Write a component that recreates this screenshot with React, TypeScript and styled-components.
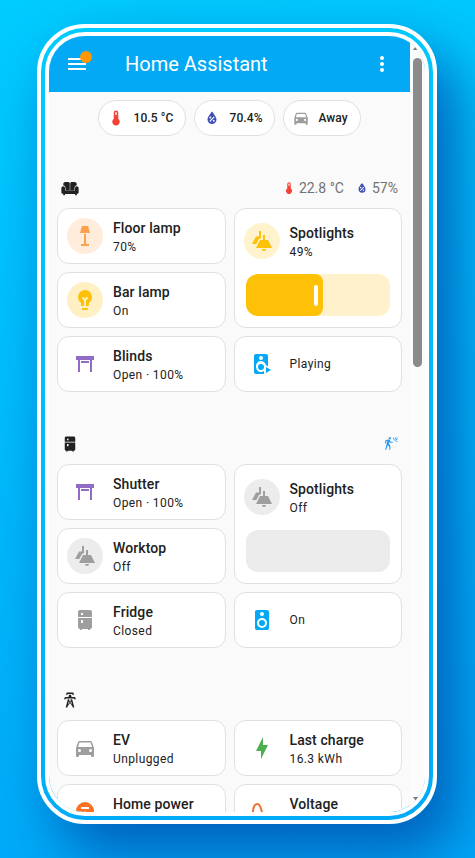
import React from "react";
import styled, { createGlobalStyle } from "styled-components";

const GlobalStyle = createGlobalStyle`
  * { box-sizing: border-box; }
  body {
    margin: 0;
    font-family: Roboto, "Noto Sans", sans-serif;
    color: #212121;
    overflow: hidden;
  }
`;

const paths = {
  menu: "M3,6H21V8H3V6M3,11H21V13H3V11M3,16H21V18H3V16Z",
  dots: "M12,16A2,2 0 0,1 14,18A2,2 0 0,1 12,20A2,2 0 0,1 10,18A2,2 0 0,1 12,16M12,10A2,2 0 0,1 14,12A2,2 0 0,1 12,14A2,2 0 0,1 10,12A2,2 0 0,1 12,10M12,4A2,2 0 0,1 14,6A2,2 0 0,1 12,8A2,2 0 0,1 10,6A2,2 0 0,1 12,4Z",
  thermometer: "M15 13V5A3 3 0 0 0 9 5V13A5 5 0 1 0 15 13M12 4A1 1 0 0 1 13 5V8H11V5A1 1 0 0 1 12 4Z",
  humidity:
    "M12,3.25C12,3.25 6,10 6,14C6,17.32 8.69,20 12,20A6,6 0 0,0 18,14C18,10 12,3.25 12,3.25M14.47,9.97L15.53,11.03L9.53,17.03L8.47,15.97M9.75,10A1.25,1.25 0 0,1 11,11.25A1.25,1.25 0 0,1 9.75,12.5A1.25,1.25 0 0,1 8.5,11.25A1.25,1.25 0 0,1 9.75,10M14.25,14.5A1.25,1.25 0 0,1 15.5,15.75A1.25,1.25 0 0,1 14.25,17A1.25,1.25 0 0,1 13,15.75A1.25,1.25 0 0,1 14.25,14.5Z",
  car: "M5,11L6.5,6.5H17.5L19,11M17.5,16A1.5,1.5 0 0,1 16,14.5A1.5,1.5 0 0,1 17.5,13A1.5,1.5 0 0,1 19,14.5A1.5,1.5 0 0,1 17.5,16M6.5,16A1.5,1.5 0 0,1 5,14.5A1.5,1.5 0 0,1 6.5,13A1.5,1.5 0 0,1 8,14.5A1.5,1.5 0 0,1 6.5,16M18.92,6C18.72,5.42 18.16,5 17.5,5H6.5C5.84,5 5.28,5.42 5.08,6L3,12V20A1,1 0 0,0 4,21H5A1,1 0 0,0 6,20V19H18V20A1,1 0 0,0 19,21H20A1,1 0 0,0 21,20V12L18.92,6Z",
  sofa: "M11.7 15H6V12.5C6 10 4.8 8.6 3 8.3V7C3 5 4.3 4 6 4H9.5C10.8 4 11.7 4.8 11.7 6V15ZM12.3 15H18V12.5C18 10 19.2 8.6 21 8.3V7C21 5 19.7 4 18 4H14.5C13.2 4 12.3 4.8 12.3 6V15ZM3 9.5C1.5 9.5 0.5 10.6 0.5 12V17.5C0.5 18.9 1.5 19.6 3 19.8V21.5H5.3V20H18.7V21.5H21V19.8C22.5 19.6 23.5 18.9 23.5 17.5V12C23.5 10.6 22.5 9.5 21 9.5S18.7 10.6 18.7 12V15.3H5.3V12C5.3 10.6 4.5 9.5 3 9.5Z",
  floorLamp: "M17,9H7L9,2H15M11,20V10H13V20H16V22H8V20H11Z",
  bulb: "M12,2A7,7 0 0,0 5,9C5,11.38 6.19,13.47 8,14.74V17A1,1 0 0,0 9,18H11V12.4L8.7,10.1L10.1,8.7L12,10.6L13.9,8.7L15.3,10.1L13,12.4V18H15A1,1 0 0,0 16,17V14.74C17.81,13.47 19,11.38 19,9A7,7 0 0,0 12,2M9,21A1,1 0 0,0 10,22H14A1,1 0 0,0 15,21V20H9V21Z",
  shutter: "M3 4H21V8H19V20H17V8H7V20H5V8H3V4M8 9H16V11H8V9Z",
  spots: "M12 20H16A2 2 0 0 1 12 20M13 6H15V11H18L22 19H6L10 11H13ZM9 2H11V9L9 10L6.3 15H2L6 7.5H9Z",
  fridge:
    "M19 4V9H10V5H8V9H5V4C5 2.9 5.9 2 7 2H17C18.11 2 19 2.9 19 4M5 19V10H19V19C19 20.11 18.11 21 17 21V22H15V21H9V22H7V21C5.9 21 5 20.11 5 19M8 12V15H10V12H8ZM8 7V9H10V7Z",
  speaker:
    "M12,12A3,3 0 0,0 9,15A3,3 0 0,0 12,18A3,3 0 0,0 15,15A3,3 0 0,0 12,12M12,20A5,5 0 0,1 7,15A5,5 0 0,1 12,10A5,5 0 0,1 17,15A5,5 0 0,1 12,20M12,4A2,2 0 0,1 14,6A2,2 0 0,1 12,8C10.89,8 10,7.1 10,6C10,4.89 10.89,4 12,4M17,2H7C5.89,2 5,2.89 5,4V20A2,2 0 0,0 7,22H17A2,2 0 0,0 19,20V4C19,2.89 18.1,2 17,2Z",
  speakerPlay:
    "M16 15V21L21 18L16 15M11 12A3 3 0 0 0 8 15A3 3 0 0 0 11 18A3 3 0 0 0 14 15A3 3 0 0 0 11 12M11 4A2 2 0 0 0 9 6A2 2 0 0 0 11 8A2 2 0 0 0 13 6A2 2 0 0 0 11 4M16 2H6C4.89 2 4 2.89 4 4V20A2 2 0 0 0 6 22H14V19A5 5 0 0 1 6 15A5 5 0 0 1 16 13.2L18 14.3V4C18 2.89 17.1 2 16 2Z",
  motion:
    "M10,0.2C9,0.2 8.2,1 8.2,2C8.2,3 9,3.8 10,3.8C11,3.8 11.8,3 11.8,2C11.8,1 11,0.2 10,0.2M15.67,1A7.33,7.33 0 0,0 23,8.33V7A6,6 0 0,1 17,1H15.67M18.33,1C18.33,3.58 20.42,5.67 23,5.67V4.33C21.16,4.33 19.67,2.84 19.67,1H18.33M21,1A2,2 0 0,0 23,3V1H21M7.92,4.03C7.75,4.03 7.58,4.06 7.42,4.11L2,5.8V11H3.8V7.33L5.91,6.67L2,22H3.8L6.67,13.89L9,17V22H10.8V15.59L8.31,11.05L9.04,8.18L10.12,10H15V8.2H11.38L9.38,4.87C9.08,4.37 8.54,4.03 7.92,4.03Z",
  tower:
    "M8.28,5.45L6.5,4.55L7.76,2H16.23L17.5,4.55L15.72,5.44L15,4H9L8.28,5.45M18.62,8H14.09L13.3,5H10.7L9.91,8H5.38L4.1,10.55L5.89,11.44L6.62,10H17.38L18.1,11.45L19.89,10.56L18.62,8M17.77,22H15.7L15.46,21.1L12,15.9L8.53,21.1L8.3,22H6.23L9.12,11H11.19L10.83,12.35L12,14.1L13.16,12.35L12.81,11H14.88L17.77,22M11.4,15L10.5,13.65L9.32,18.13L11.4,15M14.68,18.12L13.5,13.64L12.6,15L14.68,18.12Z",
  bolt: "M11 15H6L13 1V9H18L11 23V15Z",
  meter: "M12 2A9 9 0 0 0 3 11C3 14 4.4 16.6 6.7 18.3V22H17.3V18.3C19.6 16.6 21 14 21 11A9 9 0 0 0 12 2M8 7V9H16V7H8M12.5 10.5L9.5 14.5H11.5V18L14.5 14H12.5Z",
  sine: "M16.5,21C13.5,21 12.31,16.76 11.05,12.28C10.14,9.04 9,5 7.5,5C4.11,5 4,11.93 4,12H2C2,11.63 2.06,3 7.5,3C10.5,3 11.71,7.25 12.97,11.74C13.83,14.8 15,19 16.5,19C19.94,19 20.03,12.07 20.03,12H22.03C22.03,12.37 21.97,21 16.5,21Z",
};

type IconName = keyof typeof paths;

const Svg = styled.svg<{ $size: number; $color: string }>`
  display: block;
  flex: none;
  width: ${(p) => p.$size}px;
  height: ${(p) => p.$size}px;
  fill: ${(p) => p.$color};
`;

const Icon = ({ name, size = 24, color }: { name: IconName; size?: number; color: string }) => (
  <Svg viewBox="0 0 24 24" $size={size} $color={color} aria-hidden>
    <path fillRule="evenodd" d={paths[name]} />
  </Svg>
);

const Backdrop = styled.div`
  height: 858px;
  padding: 24px 38px 34px 37px;
  background: linear-gradient(170deg, #00ccff 0%, #00a8f8 100%);
`;

const Phone = styled.div`
  width: 400px;
  height: 800px;
  border: 12px double #fff;
  border-radius: 48px;
  box-shadow: 20px 30px 60px rgba(0, 90, 180, 0.95);
`;

const Screen = styled.div`
  display: flex;
  height: 776px;
  border-radius: 36px;
  background: #fafafa;
  overflow: hidden;
`;

const Main = styled.main`
  width: 361px;
`;

const Toolbar = styled.header`
  display: flex;
  align-items: center;
  height: 56px;
  padding: 0 16px;
  background: #03a9f4;
`;

const MenuButton = styled.div`
  position: relative;
  width: 24px;
`;

const Badge = styled.span`
  position: absolute;
  top: -1px;
  right: -3px;
  width: 12px;
  height: 12px;
  border-radius: 50%;
  background: #ff9800;
`;

const Title = styled.h1`
  flex: 1;
  margin: 0 0 0 36px;
  font-size: 20px;
  font-weight: 400;
  line-height: 24px;
  color: #fff;
`;

const Chips = styled.div`
  display: flex;
  justify-content: center;
  gap: 8px;
  margin-top: 8px;
`;

const Chip = styled.div<{ $width: number }>`
  display: flex;
  align-items: center;
  gap: 8.5px;
  width: ${(p) => p.$width}px;
  height: 36px;
  padding-left: 8px;
  border: 1px solid #e0e0e0;
  border-radius: 18px;
  background: #fff;
  font-size: 12px;
  font-weight: 500;
  letter-spacing: 0.1px;
  white-space: nowrap;
`;

const Section = styled.section`
  margin-top: 40px;
  padding: 0 8px;
`;

const SectionHead = styled.div`
  display: flex;
  align-items: center;
  justify-content: space-between;
  height: 32px;
  padding: 0 4px 8px;
  color: #727272;
  font-size: 14px;
`;

const Readings = styled.div`
  display: flex;
  align-items: center;
  gap: 11px;
  padding-bottom: 1px;
`;

const Reading = styled.span`
  display: flex;
  align-items: center;
  gap: 3px;
`;

const Grid = styled.div`
  display: grid;
  grid-template-columns: 1fr 1fr;
  grid-auto-rows: 56px;
  gap: 8px;
`;

const Card = styled.article<{ $tall?: boolean }>`
  grid-row: span ${(p) => (p.$tall ? 2 : 1)};
  border: 1px solid #e0e0e0;
  border-radius: 12px;
  background: #fff;
`;

const CardRow = styled.div<{ $tall?: boolean }>`
  display: flex;
  align-items: center;
  gap: 10px;
  height: ${(p) => (p.$tall ? 64 : 54)}px;
  padding-left: 9px;
`;

const IconDisc = styled.div<{ $fill?: string }>`
  display: grid;
  place-items: center;
  flex: none;
  width: 36px;
  height: 36px;
  border-radius: 50%;
  background: ${(p) => p.$fill ?? "transparent"};
`;

const Labels = styled.div<{ $named: boolean }>`
  min-height: ${(p) => (p.$named ? 38 : 0)}px;
  padding-top: ${(p) => (p.$named ? 1 : 0)}px;
`;

const Name = styled.div`
  margin-bottom: 1px;
  font-size: 14px;
  font-weight: 500;
  line-height: 20px;
  letter-spacing: 0.1px;
`;

const State = styled.div`
  font-size: 12px;
  line-height: 16px;
  letter-spacing: 0.4px;
`;

const Slider = styled.div<{ $track: string }>`
  width: 144px;
  height: 42px;
  margin: 1px 0 0 11px;
  border-radius: 12px;
  background: ${(p) => p.$track};
  overflow: hidden;
`;

const SliderFill = styled.div`
  display: flex;
  align-items: center;
  justify-content: flex-end;
  width: 77px;
  height: 100%;
  padding-right: 5px;
  border-radius: 0 8px 8px 0;
  background: #ffc107;
`;

const Handle = styled.span`
  width: 4px;
  height: 21px;
  border-radius: 2px;
  background: #fff;
`;

const Scrollbar = styled.div`
  display: flex;
  flex-direction: column;
  align-items: center;
  width: 15px;
  height: 100%;
  padding: 10px 0 11px;
  background: #fcfcfc;
`;

const Thumb = styled.div`
  width: 9px;
  height: 309px;
  margin: 8px 0 auto;
  border-radius: 5px;
  background: #8b8b8b;
`;

const Arrow = styled.span<{ $down?: boolean }>`
  width: 6px;
  height: 4px;
  margin-right: 3px;
  background: #777;
  clip-path: ${(p) => (p.$down ? "polygon(0 0, 100% 0, 50% 100%)" : "polygon(0 100%, 100% 100%, 50% 0)")};
`;

type TileProps = {
  icon: IconName;
  color: string;
  disc?: string;
  name?: string;
  state?: string;
  tall?: boolean;
  children?: React.ReactNode;
};

const Tile = ({ icon, color, disc, name, state, tall, children }: TileProps) => (
  <Card $tall={tall}>
    <CardRow $tall={tall}>
      <IconDisc $fill={disc}>
        <Icon name={icon} color={color} />
      </IconDisc>
      <Labels $named={Boolean(name)}>
        {name && <Name>{name}</Name>}
        {state && <State>{state}</State>}
      </Labels>
    </CardRow>
    {children}
  </Card>
);

const RED = "#f44336";
const INDIGO = "#3f51b5";
const GREY = "#9e9e9e";
const AMBER = "#ffc107";
const PURPLE = "#926bc7";
const BLUE = "#03a9f4";

export default function App() {
  return (
    <Backdrop>
      <GlobalStyle />
      <Phone>
        <Screen>
          <Main>
            <Toolbar>
              <MenuButton>
                <Icon name="menu" color="#fff" />
                <Badge />
              </MenuButton>
              <Title>Home Assistant</Title>
              <Icon name="dots" color="#fff" />
            </Toolbar>
            <Chips>
              <Chip $width={88}>
                <Icon name="thermometer" size={18} color={RED} />
                10.5 °C
              </Chip>
              <Chip $width={81}>
                <Icon name="humidity" size={18} color={INDIGO} />
                70.4%
              </Chip>
              <Chip $width={78}>
                <Icon name="car" size={18} color={GREY} />
                Away
              </Chip>
            </Chips>

            <Section>
              <SectionHead>
                <Icon name="sofa" size={18} color="#212121" />
                <Readings>
                  <Reading>
                    <Icon name="thermometer" size={14} color={RED} />
                    22.8 °C
                  </Reading>
                  <Reading>
                    <Icon name="humidity" size={14} color={INDIGO} />
                    57%
                  </Reading>
                </Readings>
              </SectionHead>
              <Grid>
                <Tile icon="floorLamp" color="#ffa04a" disc="#ffecdb" name="Floor lamp" state="70%" />
                <Tile tall icon="spots" color={AMBER} disc="#fff3cd" name="Spotlights" state="49%">
                  <Slider $track="#fff1cc">
                    <SliderFill>
                      <Handle />
                    </SliderFill>
                  </Slider>
                </Tile>
                <Tile icon="bulb" color={AMBER} disc="#fff0c4" name="Bar lamp" state="On" />
                <Tile icon="shutter" color={PURPLE} name="Blinds" state="Open · 100%" />
                <Tile icon="speakerPlay" color={BLUE} state="Playing" />
              </Grid>
            </Section>

            <Section>
              <SectionHead>
                <Icon name="fridge" size={18} color="#212121" />
                <Icon name="motion" size={14} color="#2196f3" />
              </SectionHead>
              <Grid>
                <Tile icon="shutter" color={PURPLE} name="Shutter" state="Open · 100%" />
                <Tile tall icon="spots" color={GREY} disc="#ececec" name="Spotlights" state="Off">
                  <Slider $track="#ebebeb" />
                </Tile>
                <Tile icon="spots" color={GREY} disc="#ececec" name="Worktop" state="Off" />
                <Tile icon="fridge" color={GREY} name="Fridge" state="Closed" />
                <Tile icon="speaker" color={BLUE} state="On" />
              </Grid>
            </Section>

            <Section>
              <SectionHead>
                <Icon name="tower" size={18} color="#212121" />
              </SectionHead>
              <Grid>
                <Tile icon="car" color={GREY} name="EV" state="Unplugged" />
                <Tile icon="bolt" color="#4caf50" name="Last charge" state="16.3 kWh" />
                <Tile icon="meter" color="#ff6f22" name="Home power" />
                <Tile icon="sine" color="#ef7134" name="Voltage" />
              </Grid>
            </Section>
          </Main>
          <Scrollbar>
            <Arrow />
            <Thumb />
            <Arrow $down />
          </Scrollbar>
        </Screen>
      </Phone>
    </Backdrop>
  );
}
